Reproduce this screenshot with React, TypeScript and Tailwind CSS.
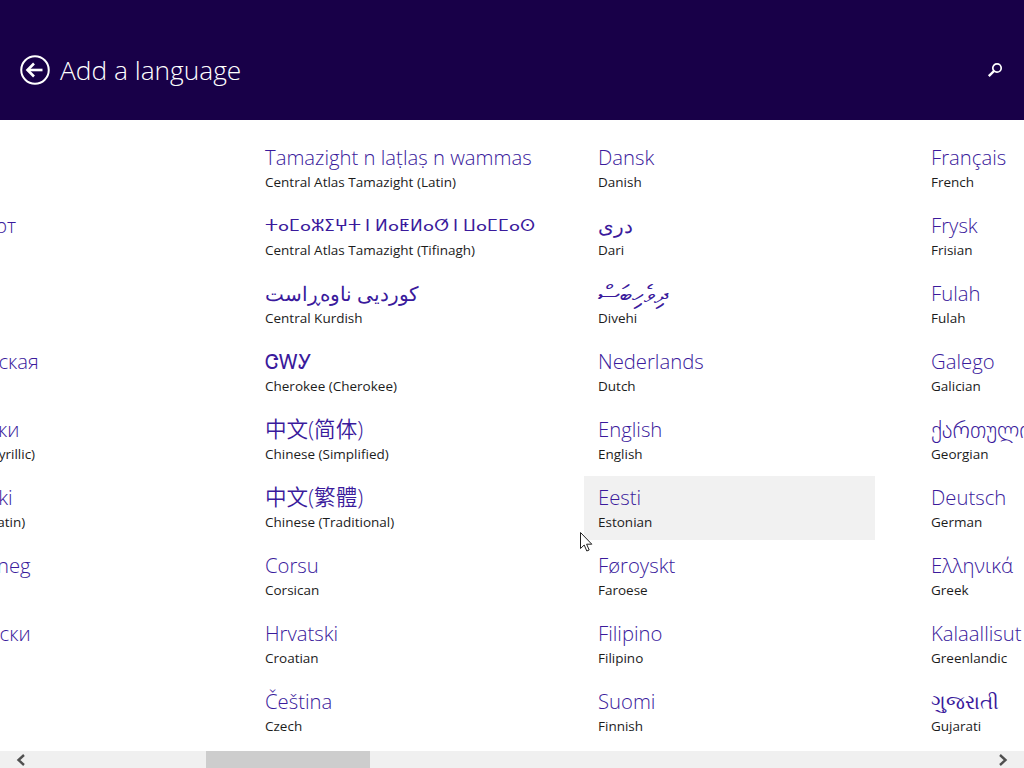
const columns = [
  [
    { name: "বাংলা", sub: "Bangla" },
    { name: "Башҡорт", sub: "Bashkir" },
    { name: "euskara", sub: "Basque", size: "text-[18.5px]" },
    { name: "Беларуская", sub: "Belarusian" },
    { name: "босански", sub: "Bosnian (Cyrillic)" },
    { name: "Bosanski", sub: "Bosnian (Latin)" },
    { name: "Brezhoneg", sub: "Breton" },
    { name: "Български", sub: "Bulgarian" },
    { name: "Català", sub: "Catalan" },
  ],
  [
    { name: "Tamazight n laṭlaṣ n wammas", sub: "Central Atlas Tamazight (Latin)" },
    { name: "ⵜⴰⵎⴰⵣⵉⵖⵜ ⵏ ⵍⴰⵟⵍⴰⵚ ⵏ ⵡⴰⵎⵎⴰⵙ", sub: "Central Atlas Tamazight (Tifinagh)", size: "text-[17.3px]" },
    { name: "کوردیی ناوەڕاست", sub: "Central Kurdish" },
    { name: "ᏣᎳᎩ", sub: "Cherokee (Cherokee)" },
    { name: "中文(简体)", sub: "Chinese (Simplified)", size: "text-[21.6px]" },
    { name: "中文(繁體)", sub: "Chinese (Traditional)", size: "text-[21.6px]" },
    { name: "Corsu", sub: "Corsican" },
    { name: "Hrvatski", sub: "Croatian" },
    { name: "Čeština", sub: "Czech" },
  ],
  [
    { name: "Dansk", sub: "Danish" },
    { name: "دری", sub: "Dari" },
    { name: "ދިވެހިބަސް", sub: "Divehi", size: "text-[25px]" },
    { name: "Nederlands", sub: "Dutch" },
    { name: "English", sub: "English" },
    { name: "Eesti", sub: "Estonian", hover: true },
    { name: "Føroyskt", sub: "Faroese" },
    { name: "Filipino", sub: "Filipino" },
    { name: "Suomi", sub: "Finnish" },
  ],
  [
    { name: "Français", sub: "French" },
    { name: "Frysk", sub: "Frisian" },
    { name: "Fulah", sub: "Fulah" },
    { name: "Galego", sub: "Galician" },
    { name: "ქართული", sub: "Georgian", size: "text-[23px]" },
    { name: "Deutsch", sub: "German" },
    { name: "Ελληνικά", sub: "Greek" },
    { name: "Kalaallisut", sub: "Greenlandic" },
    { name: "ગુજરાતી", sub: "Gujarati" },
  ],
];

export default function App() {
  return (
    <div className="relative flex h-[768px] w-[1024px] flex-col overflow-hidden bg-white font-['Open_Sans','Noto_Sans','DejaVu_Sans','Noto_Sans_CJK_SC',sans-serif]">
      {/* Header */}
      <div className="flex h-[120px] shrink-0 items-center justify-between bg-[#180048] pl-5 pr-[21px] pt-5 text-white">
        <div className="flex items-center gap-[10px]">
          <svg width="30" height="30" viewBox="0 0 30 30" fill="none" stroke="white">
            <circle cx="15" cy="15" r="13.75" strokeWidth="2" />
            <path d="M7.5 15H22.5" strokeWidth="2.6" />
            <path d="M14 8.5L7.5 15L14 21.5" strokeWidth="2.6" />
          </svg>
          <h1 className="text-[26.3px] leading-[34px] font-[350]">Add a language</h1>
        </div>
        <svg width="16" height="16" viewBox="0 0 16 16" fill="none" stroke="white">
          <circle cx="10" cy="6" r="4.2" strokeWidth="1.7" />
          <path d="M7 9L1.8 14.2" strokeWidth="2.4" />
        </svg>
      </div>

      {/* Language list */}
      <div className="ml-[-82px] flex flex-1 gap-[42px] pt-4">
        {columns.map((col, i) => (
          <div key={i} className="flex w-[291px] shrink-0 flex-col gap-1">
            {col.map((lang) => (
              <div
                key={lang.sub}
                className={`h-[64px] overflow-hidden px-[14px] pt-[5px] ${lang.hover ? "bg-[#f1f1f1]" : ""}`}
              >
                <div
                  className={`h-[32px] ${lang.size ?? "text-[20.3px]"} leading-[32px] font-[350] whitespace-nowrap text-[#3a1a9c]`}
                >
                  {lang.name}
                </div>
                <div className="mt-[-1px] text-[13.5px] leading-[20px] whitespace-nowrap text-[#1c1c1c]">
                  {lang.sub}
                </div>
              </div>
            ))}
          </div>
        ))}
      </div>

      {/* Scrollbar */}
      <div className="flex h-[17px] shrink-0 items-center justify-between bg-[#f0f0f0]">
        <div className="flex h-full">
          <div className="flex w-[206px] items-center pl-[16px]">
            <svg width="10" height="12" viewBox="0 0 10 12" fill="none" stroke="#505050" strokeWidth="2.4">
              <path d="M8 1L2.5 6L8 11" />
            </svg>
          </div>
          <div className="h-full w-[164px] bg-[#cdcdcd]" />
        </div>
        <div className="pr-[16px]">
          <svg width="10" height="12" viewBox="0 0 10 12" fill="none" stroke="#505050" strokeWidth="2.4">
            <path d="M2 1L7.5 6L2 11" />
          </svg>
        </div>
      </div>

      {/* Mouse cursor */}
      <svg className="absolute left-[580px] top-[532px]" width="13" height="20" viewBox="0 0 13 20">
        <path
          d="M0.5 0.5V16.5L4.2 13L6.8 19L9.2 18L6.6 12.2H11.8Z"
          fill="white"
          stroke="#222"
          strokeWidth="1"
        />
      </svg>
    </div>
  );
}
